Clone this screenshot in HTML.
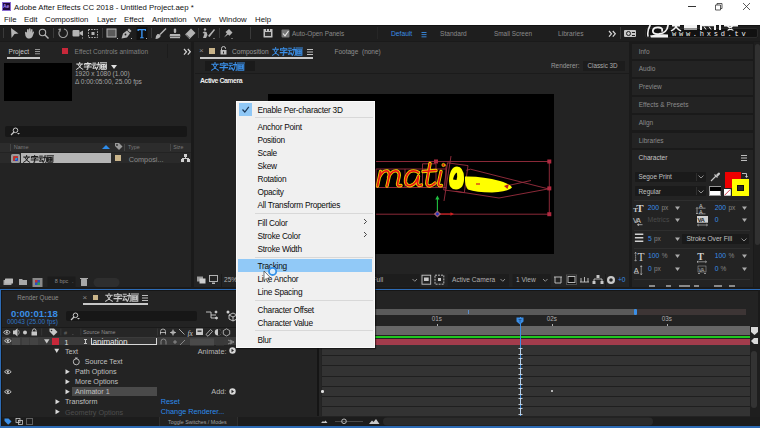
<!DOCTYPE html>
<html><head><meta charset="utf-8">
<style>
*{margin:0;padding:0;box-sizing:border-box}
html,body{width:760px;height:428px;overflow:hidden;background:#1a1a1a;font-family:"Liberation Sans",sans-serif;}
.a{position:absolute}
.t{position:absolute;white-space:nowrap;line-height:1;font-size:8px}
.g{color:#a9a9a9}
.dg{color:#6a6a6a}
.bl{color:#2d8ceb}
.w{color:#e0e0e0}
.panel{position:absolute;background:#232323}
</style></head><body>
<svg width="0" height="0" style="position:absolute"><defs>
<symbol id="wz" viewBox="0 0 34 9">
<g fill="none" stroke="currentColor" stroke-width="1.05" stroke-linecap="square">
<path d="M4 0.6V1.6M0.8 2.3H7.2M2.2 2.8Q3.5 6.5 7.3 8.3M5.8 2.8Q4.5 6.5 0.7 8.3"/>
<path d="M12.8 0.4V1.3M9.3 3.3V1.7H16.3V3.3M10.6 3.2H14.8L12.8 4.6M12.8 4.6V8.2L11.8 8.2M9 5.6H16.6"/>
<path d="M18.3 1.3H21.2M17.8 3.3H21.7M19.6 3.6L18.2 7.2L21.6 6.5M20.8 5.5L21.8 7.5M22.6 2.6H25.9V7.6Q25.9 8.4 24.9 8.3M24.3 0.6Q24.3 6 22.3 8.4"/>
<path d="M26.3 0.9H33.4M27 2.4V8.2H32.8V2.4M28.2 2.8H31.6V6.8H28.2ZM28.2 4.8H31.6M29.9 2.8V6.8"/>
</g></symbol></defs></svg>
<!-- title bar -->
<div class="a" style="left:0;top:0;width:760px;height:25px;background:#fff"></div>
<div class="a" style="left:2px;top:2px;width:9px;height:9px;background:#1f0a3a;border:1px solid #8a6ad0"></div>
<div class="t" style="left:3px;top:4px;font-size:5px;color:#a98bff;font-weight:bold">Ae</div>
<div class="t" style="left:14px;top:3.5px;font-size:7.8px;color:#111">Adobe After Effects CC 2018 - Untitled Project.aep *</div>
<div class="t" style="left:4px;top:16px;font-size:7.8px;color:#111">File</div>
<div class="t" style="left:24px;top:16px;font-size:7.8px;color:#111">Edit</div>
<div class="t" style="left:45px;top:16px;font-size:7.8px;color:#111">Composition</div>
<div class="t" style="left:97px;top:16px;font-size:7.8px;color:#111">Layer</div>
<div class="t" style="left:124px;top:16px;font-size:7.8px;color:#111">Effect</div>
<div class="t" style="left:152px;top:16px;font-size:7.8px;color:#111">Animation</div>
<div class="t" style="left:194px;top:16px;font-size:7.8px;color:#111">View</div>
<div class="t" style="left:219px;top:16px;font-size:7.8px;color:#111">Window</div>
<div class="t" style="left:255px;top:16px;font-size:7.8px;color:#111">Help</div>
<!-- window controls -->
<div class="a" style="left:688px;top:6px;width:8px;height:0.8px;background:#333"></div>
<svg class="a" style="left:714px;top:2px" width="9" height="9"><path d="M1.5 3H6.5V8H1.5Z M3 3V1.5H8V6.5H6.5" fill="none" stroke="#333" stroke-width="0.8"/></svg>
<svg class="a" style="left:742px;top:2px" width="9" height="9"><path d="M1 1L8 8M8 1L1 8" fill="none" stroke="#333" stroke-width="0.8"/></svg>

<!-- toolbar -->
<div class="a" style="left:0;top:25px;width:760px;height:16px;background:#1e1e1e"></div>
<div class="a" style="left:0;top:25px;width:760px;height:1.3px;background:#121212"></div>
<div class="a" style="left:376.5px;top:27px;width:1px;height:12px;background:#262626"></div>


<svg class="a" style="left:0;top:25px" width="760" height="16" viewBox="0 25 760 16">
<g fill="#b4b4b4" stroke="none">
<!-- separators -->
<rect x="3" y="28" width="1" height="10" fill="#3a3a3a"/>
<rect x="53" y="28" width="1" height="10" fill="#3a3a3a"/>
<rect x="102" y="28" width="1" height="10" fill="#3a3a3a"/>
<rect x="151" y="28" width="1" height="10" fill="#3a3a3a"/>
<rect x="198" y="28" width="1" height="10" fill="#3a3a3a"/>
<rect x="219" y="28" width="1" height="10" fill="#3a3a3a"/>
<rect x="250" y="27" width="1" height="12" fill="#3a3a3a"/>
<!-- arrow -->
<path d="M11 28 L18.5 33.5 L14.5 34 L11.5 38 Z"/>
<!-- hand -->
<path d="M25 33 Q25 31 26.5 32 L27 33 L27 29.5 Q28 28.5 28.7 29.5 L28.8 32 L29 28.7 Q30 28 30.6 28.8 L30.7 32 L31.2 29.3 Q32 28.6 32.5 29.5 L32.5 33 L33.2 31.5 Q34.2 31.2 34 32.5 L32.5 36.5 Q31.5 38.5 29.5 38.5 L28 38.5 Q26.5 38 25.5 36 Z"/>
<!-- magnifier -->
<circle cx="42.5" cy="32.5" r="3.2" fill="none" stroke="#b4b4b4" stroke-width="1.1"/>
<path d="M44.8 34.8 L48.5 38.5" stroke="#b4b4b4" stroke-width="1.4"/>
<!-- rotate -->
<path d="M59.5 31 A4.3 4.3 0 1 0 64 29" fill="none" stroke="#9a9a9a" stroke-width="1.1"/>
<path d="M58 29 L61 28.5 L60.5 32 Z" fill="#9a9a9a"/>
<!-- camera -->
<rect x="72.5" y="30" width="7" height="6.5" rx="1"/>
<path d="M79.5 32.5 L83 30.5 L83 36 L79.5 34 Z"/>
<rect x="82" y="37.5" width="1" height="1"/>
<!-- pan behind -->
<g fill="none" stroke="#b4b4b4" stroke-width="1" stroke-dasharray="1.5 1.2">
<rect x="88.5" y="29.5" width="9" height="8"/>
</g>
<rect x="91.5" y="32" width="3" height="3"/>
<!-- rectangle -->
<rect x="107" y="29" width="9" height="8" fill="#5a5a5a" stroke="#b4b4b4" stroke-width="1"/>
<rect x="117" y="38" width="1" height="1"/>
<!-- pen -->
<path d="M121.5 38.5 L123 33.5 L127 30.5 L130 33.5 L127 37.5 Z"/><path d="M127.5 30 L129 28.5 L131.5 31 L130 32.5 Z"/><circle cx="125.5" cy="34.5" r="0.9" fill="#1e1e1e"/>
<rect x="131" y="38" width="1" height="1"/>
<!-- Type tool -->
<rect x="136.5" y="27" width="11" height="13" fill="#101010"/>
<path d="M137.5 29 L146 29 L146 31 L145 31 L144.8 30.2 L142.6 30.2 L142.6 37.3 L143.8 37.6 L143.8 38.3 L140 38.3 L140 37.6 L141.2 37.3 L141.2 30.2 L139 30.2 L138.8 31 L137.5 31 Z" fill="#3b93f0"/>
<rect x="146" y="38" width="1" height="1"/>
<!-- brush -->
<path d="M165.5 28 L166.5 29 L160.5 35 L159.5 34 Z"/><path d="M155.5 39 Q155.5 35.5 157.5 34 Q159 33.5 160.5 35 Q161 37 159 38 Q157.5 39 155.5 39 Z"/>
<!-- stamp -->
<rect x="173.8" y="28.5" width="2.4" height="4.5" rx="1.2"/>
<path d="M170 34 L180 34 L180.5 36.5 L169.5 36.5 Z"/>
<rect x="170" y="37" width="10" height="1.2"/>
<!-- eraser -->
<path d="M185 34.5 L191 28.5 L195.5 33 L189.5 39 Z"/>
<path d="M186 34.5 L189.5 38" stroke="#1e1e1e" stroke-width="0.8"/>
<!-- roto brush -->
<circle cx="205" cy="29.5" r="1.2"/><path d="M203 38 L204.5 33.5 L202.5 33 L204 31.5 L206.5 32 L207.5 35 L206 38 Z"/>
<path d="M208 36 L214 29 L215 30 L209.5 37 Z"/>
<rect x="213.5" y="38" width="1" height="1"/>
<!-- puppet pin -->
<path d="M224 37.5 L227 33.5 L225.5 32 L229 29 L232.5 32.5 L229.5 35.8 L228 34.5 Z"/>
<rect x="231.5" y="38" width="1" height="1"/>
<!-- auto open icon -->
<rect x="263.5" y="29" width="9" height="8.5" rx="0.5" fill="#c0c0c0"/>
<rect x="265" y="32" width="6" height="4" fill="#333"/>
<rect x="266" y="29" width="1" height="2" fill="#333"/>
<rect x="269" y="29" width="1" height="2" fill="#333"/>
<!-- checkbox -->
<rect x="281.5" y="29.5" width="8" height="8" fill="#777" rx="1"/>
<path d="M283 33.5 L285 35.8 L288.5 31" fill="none" stroke="#eaeaea" stroke-width="1.1"/>
</g>
</svg>
<div class="t" style="left:292px;top:31px;font-size:6.4px;color:#8a8a8a">Auto-Open Panels</div>

<div class="t bl" style="left:391px;top:31px;font-size:6.7px;color:#3a8ee6">Default</div>
<svg class="a" style="left:420.5px;top:31.5px" width="7" height="6"><g fill="#3a8ee6"><rect x="0.5" y="0" width="5" height="0.9"/><rect x="0.5" y="2.2" width="5" height="0.9"/><rect x="0.5" y="4.4" width="5" height="0.9"/></g></svg>
<div class="t" style="left:440px;top:31px;font-size:6.6px;color:#8a8a8a">Standard</div>
<div class="t" style="left:494px;top:31px;font-size:6.4px;color:#8a8a8a">Small Screen</div>
<div class="t" style="left:558px;top:31px;font-size:6.65px;color:#8a8a8a">Libraries</div>
<svg class="a" style="left:607.5px;top:30px" width="9" height="8"><path d="M1 1L3.5 3.8L1 6.6M4.8 1L7.3 3.8L4.8 6.6" fill="none" stroke="#d8d8d8" stroke-width="1.2"/></svg>
<div class="a" style="left:620px;top:27px;width:1px;height:12px;background:#3a3a3a"></div>
<div class="a" style="left:624px;top:30px;width:12px;height:7px;background:#c8c8c8;border-radius:1px"></div>
<div class="a" style="left:625.5px;top:31px;width:5px;height:5px;border:1.2px solid #222;border-radius:50%"></div><div class="a" style="left:631.5px;top:32px;width:3px;height:1px;background:#222"></div><div class="a" style="left:631.5px;top:34.5px;width:3px;height:1px;background:#222"></div>
<div class="a" style="left:645px;top:28px;width:113px;height:10px;background:#111;border:1px solid #2a2a2a;border-radius:2px"></div>

<svg class="a" style="left:640px;top:25px" width="120" height="15" viewBox="640 25 120 15">
<g fill="none" stroke="#f2f2f2" stroke-linecap="round">
<path d="M650 25.5Q647 31 648 36" stroke-width="1.6"/>
<path d="M668 25.5Q667 33 659 34Q652 34.5 653 30Q654 27 659 27.5Q663 28 662 31" stroke-width="1.8"/>
</g>
<path d="M650 35.5Q660 33.5 668 34.5L668 37.5L651 37.5Z" fill="#f2f2f2"/>
<g fill="#f4f4f4">
<path d="M672 25h8v1.5h-8zM675 25h2v2q2 2 4.5 3.5l-1 1q-3-1.5-4.5-3.5q-1.5 2-4.5 3.5l-1-1q2.5-1.5 4.5-3.5z"/>
<rect x="684" y="25" width="13" height="3.5"/><rect x="684" y="28.8" width="13" height="1.2" fill="#9a9a9a"/>
<path d="M700 25h2v5h-2zM714 25h2v5h-2zM702 25h12v1.3h-12z"/><path d="M704 26.5l2 3M709 26.5l2 3" stroke="#f4f4f4" stroke-width="1"/>
<path d="M719 25h2v5h-2zM724 25h14v1.5h-14zM727 26.5l5 4h2l-5-4zM733 26.5l-4 4h-2l4-4z"/>
</g>
<text x="672" y="36.3" font-family="Liberation Mono" font-size="7" fill="#f0f0f0" letter-spacing="2.75">www.hxsd.tv</text>
</svg>
<!-- panels -->
<div class="panel" style="left:0;top:42px;width:191px;height:245px"></div>
<div class="panel" style="left:194px;top:42px;width:435px;height:245px"></div>
<div class="panel" style="left:631px;top:42px;width:129px;height:245px"></div>


<!-- PROJECT PANEL -->
<div class="t" style="left:8.5px;top:48.6px;font-size:6.6px;color:#c8c8c8">Project</div>
<svg class="a" style="left:35px;top:49px" width="7" height="7"><g fill="#b0b0b0"><rect x="0" y="0" width="5" height="0.8"/><rect x="0" y="2.2" width="5" height="0.8"/><rect x="0" y="4.4" width="5" height="0.8"/></g></svg>
<div class="a" style="left:7px;top:57px;width:33px;height:1.5px;background:#c8c8c8"></div>
<div class="a" style="left:62px;top:48px;width:6px;height:6px;background:#c7283a"></div>
<div class="t" style="left:74.5px;top:48.6px;font-size:6.6px;color:#808080">Effect Controls animation</div>
<div class="a" style="left:167px;top:44px;width:1px;height:14px;background:#1c1c1c"></div>
<svg class="a" style="left:182.5px;top:47.5px" width="9" height="8"><path d="M1 1L3.5 3.8L1 6.6M4.8 1L7.3 3.8L4.8 6.6" fill="none" stroke="#d8d8d8" stroke-width="1.2"/></svg>
<div class="a" style="left:4px;top:63px;width:68px;height:38px;background:#000"></div>
<svg class="a" style="left:75.8px;top:61.5px;color:#e6e6e6" width="31.5" height="8" viewBox="0 0 34 9" preserveAspectRatio="none"><use href="#wz"/></svg>
<svg class="a" style="left:110.5px;top:64.5px" width="6" height="5"><path d="M0 0h6l-3 4z" fill="#e0e0e0"/></svg>
<div class="t" style="left:75px;top:71px;font-size:6.5px;color:#a6a6a6">1920 x 1080 (1.00)</div>
<div class="t" style="left:75px;top:79px;font-size:6.5px;color:#a6a6a6">&#x394; 0:00:05:00, 25.00 fps</div>
<div class="a" style="left:5px;top:126px;width:182px;height:11px;background:#171717;border-radius:2px"></div>
<svg class="a" style="left:9px;top:127px" width="12" height="9"><circle cx="6.5" cy="3.3" r="2.3" fill="none" stroke="#c8c8c8" stroke-width="1"/><path d="M5 5L2 8" stroke="#c8c8c8" stroke-width="1.2"/><path d="M8 6h3l-1.5 1.5z" fill="#c8c8c8"/></svg>
<div class="a" style="left:0;top:142.5px;width:191px;height:9.5px;background:#2c2c2c"></div>
<div class="a" style="left:10px;top:144px;width:1px;height:7px;background:#444"></div>
<div class="t" style="left:13.8px;top:144.8px;font-size:5.5px;color:#7a7a7a">Name</div>
<svg class="a" style="left:102px;top:145px" width="8" height="5"><path d="M0 4L4 0L8 4z" fill="#2d8ceb"/></svg>
<svg class="a" style="left:114px;top:142px" width="9" height="9"><path d="M1 1h4l3.5 3.5-3.5 3.5-4-4z" fill="#9a9a9a"/><circle cx="3" cy="3" r="0.9" fill="#2c2c2c"/></svg>
<div class="a" style="left:124px;top:144px;width:1px;height:7px;background:#444"></div>
<div class="t" style="left:128px;top:144.8px;font-size:5.4px;color:#7a7a7a">Type</div>
<div class="a" style="left:170px;top:144px;width:1px;height:7px;background:#444"></div>
<div class="t" style="left:173.2px;top:144.8px;font-size:5.2px;color:#7a7a7a">Size</div>
<div class="a" style="left:0;top:153px;width:191px;height:10px;background:#2a2a2a"></div>
<div class="a" style="left:10.5px;top:154px;width:9px;height:8.5px;background:#9a9a9a;border-radius:1.5px"></div>
<div class="a" style="left:12.5px;top:155.5px;width:5px;height:5px;background:#2f9ec0;border-radius:1px;box-shadow:inset 2px 2px 0 #c0342c,inset -1px -1px 0 #3040c0"></div>
<div class="a" style="left:21px;top:153px;width:90px;height:10px;background:#b5b5b5"></div>
<svg class="a" style="left:23px;top:154.5px;color:#111" width="31" height="8" viewBox="0 0 34 9" preserveAspectRatio="none"><use href="#wz"/></svg>
<div class="a" style="left:115px;top:154.5px;width:6px;height:6px;background:#c9b48a"></div>
<div class="t" style="left:128.7px;top:156px;font-size:7.3px;color:#8a8a8a">Composi...</div>
<svg class="a" style="left:181px;top:154px" width="9" height="9"><g fill="#d0d0d0"><rect x="3" y="0" width="3" height="3"/><rect x="0" y="5" width="3" height="3"/><rect x="6" y="5" width="3" height="3"/><rect x="4" y="3" width="1" height="1"/><rect x="1" y="4" width="7" height="1"/></g></svg>
<!-- project bottom bar -->
<div class="a" style="left:0;top:274px;width:191px;height:13px;background:#232323"></div>
<svg class="a" style="left:0;top:275.5px" width="191" height="13"><g fill="#a8a8a8">
<rect x="3.5" y="4" width="8" height="5" rx="0.5"/><rect x="5" y="2.5" width="8" height="5" rx="0.5" fill="#bbb"/>
<path d="M19 3h3l1 1h4v5h-8z"/>
<rect x="32.5" y="2" width="10" height="9" fill="#8a8a8a"/><rect x="35" y="4" width="5" height="5" fill="#2d4ec0"/><rect x="35" y="4" width="2.5" height="2.5" fill="#c03030"/><rect x="37.5" y="6.5" width="2.5" height="2.5" fill="#30a040"/>
<rect x="81" y="3" width="6" height="7" rx="0.5"/><rect x="80" y="2" width="8" height="1"/>
</g>
<rect x="47.5" y="0.5" width="28" height="11" fill="#1c1c1c"/>
<rect x="93.5" y="2" width="26" height="9" rx="4.5" fill="#2e2e2e"/>
</svg>
<div class="t" style="left:54.8px;top:279px;font-size:5.5px;color:#8a8a8a">8 bpc</div>
<div class="t" style="left:72px;top:279px;font-size:5.5px;color:#8a8a8a">.</div>


<!-- COMP PANEL -->
<div class="t" style="left:199px;top:47px;font-size:8px;color:#8a8a8a">&#xD7;</div>
<div class="a" style="left:209px;top:48px;width:6px;height:6px;background:#c9b48a"></div>
<svg class="a" style="left:220px;top:46px" width="7" height="9"><path d="M1.5 4V2.5A2 2 0 0 1 5.5 2.5V3" fill="none" stroke="#c0c0c0" stroke-width="1"/><rect x="0.5" y="4" width="6" height="4.5" fill="#c0c0c0"/><rect x="3" y="5.5" width="1" height="2" fill="#232323"/></svg>
<div class="t" style="left:232px;top:48.6px;font-size:6.6px;color:#9a9a9a">Composition</div>
<svg class="a" style="left:271.5px;top:47px;color:#3a8ee6" width="31" height="9" viewBox="0 0 34 9" preserveAspectRatio="none"><use href="#wz"/></svg>
<svg class="a" style="left:307px;top:48.5px" width="7" height="7"><g fill="#bdbdbd"><rect x="0" y="0" width="6" height="1"/><rect x="0" y="2.5" width="6" height="1"/><rect x="0" y="5" width="6" height="1"/></g></svg>
<div class="a" style="left:200px;top:57px;width:113px;height:1.5px;background:#c8c8c8"></div>
<div class="t" style="left:334.5px;top:48.6px;font-size:6.5px;color:#8e8e8e">Footage&nbsp;&nbsp;(none)</div>

<div class="a" style="left:205px;top:61px;width:50px;height:10px;background:#1a1a1a"></div>
<svg class="a" style="left:211px;top:62px;color:#3a8ee6" width="34" height="9"><use href="#wz"/></svg>
<div class="t" style="left:551px;top:63.2px;font-size:6.4px;color:#9a9a9a">Renderer:</div>
<div class="a" style="left:583px;top:61px;width:42px;height:10px;background:#1c1c1c"></div>
<div class="t" style="left:587.5px;top:63.2px;font-size:6.3px;color:#acacac">Classic 3D</div>
<div class="a" style="left:195px;top:73px;width:434px;height:1px;background:#1b1b1b"></div>
<div class="t" style="left:200px;top:78px;font-size:6.9px;color:#ececec;font-weight:bold;letter-spacing:-0.45px">Active Camera</div>
<div class="a" style="left:268px;top:94px;width:285.5px;height:160px;background:#000"></div>




<!-- TIMELINE -->
<div class="a" style="left:0;top:288.7px;width:760px;height:139.3px;background:#2d6bb5"></div>
<div class="a" style="left:1.3px;top:289.8px;width:758.7px;height:136px;background:#161616"></div>
<div class="a" style="left:2.4px;top:290.8px;width:757.6px;height:134.4px;background:#232323"></div>
<div class="a" style="left:758px;top:289.7px;width:2px;height:136px;background:#1a1a1a"></div>
<div class="t" style="left:17.2px;top:294.5px;font-size:6.3px;color:#8c8c8c">Render Queue</div>
<div class="t" style="left:82.5px;top:293.5px;font-size:8px;color:#8a8a8a">&#xD7;</div>
<div class="a" style="left:92.7px;top:294.5px;width:5.5px;height:5.5px;background:#c9b48a"></div>
<svg class="a" style="left:105px;top:293px;color:#c8c8c8" width="34" height="9"><use href="#wz"/></svg>
<svg class="a" style="left:142px;top:294.5px" width="7" height="7"><g fill="#bdbdbd"><rect x="0" y="0" width="6" height="1"/><rect x="0" y="2.5" width="6" height="1"/><rect x="0" y="5" width="6" height="1"/></g></svg>
<div class="a" style="left:83px;top:303px;width:64.7px;height:1.5px;background:#c8c8c8"></div>
<div class="t" style="left:11px;top:308.5px;font-size:9.6px;color:#3a8ee6;font-weight:bold">0:00:01:18</div>
<div class="t" style="left:6.9px;top:318.5px;font-size:6.5px;color:#2f74c4">00043 (25.00 fps)</div>
<div class="a" style="left:66px;top:310.9px;width:131.4px;height:10px;background:#171717;border-radius:2px"></div>
<svg class="a" style="left:69px;top:311.5px" width="12" height="9"><circle cx="6.5" cy="3.3" r="2.3" fill="none" stroke="#c8c8c8" stroke-width="1"/><path d="M5 5L2 8" stroke="#c8c8c8" stroke-width="1.2"/><path d="M8 6h3l-1.5 1.5z" fill="#c8c8c8"/></svg>
<svg class="a" style="left:205px;top:309px" width="36" height="14"><g fill="none" stroke="#d0d0d0" stroke-width="0.9"><path d="M1 3h5M6 3v6h5M6 6h5"/><circle cx="11" cy="3" r="1" fill="#d0d0d0"/><circle cx="11.5" cy="9" r="1" fill="#d0d0d0"/><path d="M24 6l4-2 4 2v4l-4 2-4-2zM24 6l4 2 4-2M28 8v4"/></g><circle cx="23" cy="3" r="1.5" fill="#d0d0d0"/></svg>
<div class="a" style="left:1.5px;top:327.5px;width:315.5px;height:9.8px;background:#262626"></div>
<div class="a" style="left:1.5px;top:326.8px;width:316px;height:0.8px;background:#1a1a1a"></div>
<svg class="a" style="left:0;top:327px" width="240" height="11" viewBox="0 327 240 11"><g fill="#c8c8c8">
<path d="M3.5 332.3Q6.8 328.3 10.2 332.3Q6.8 336.3 3.5 332.3Z" fill="none" stroke="#c8c8c8" stroke-width="0.9"/><circle cx="6.8" cy="332.3" r="1.1"/>
<path d="M13 330.5h2l2.5-2.2v8.2l-2.5-2.2h-2z"/><path d="M18.5 330Q20 332.3 18.5 334.6" fill="none" stroke="#c8c8c8" stroke-width="0.7"/>
<circle cx="25" cy="332.5" r="2"/>
<rect x="31.5" y="331.5" width="5.5" height="4"/><path d="M32.5 331.5v-1.3a1.8 1.8 0 0 1 3.5 0v1.3" fill="none" stroke="#c8c8c8" stroke-width="0.9"/>
<rect x="41.3" y="328.5" width="0.8" height="7" fill="#3a3a3a"/>
<path d="M49.5 328.5h4.5l3.5 3.5-3.8 3.8-4.2-4.2z"/><circle cx="51.5" cy="330.5" r="0.8" fill="#262626"/>
<rect x="60.5" y="328.5" width="0.8" height="7" fill="#3a3a3a"/>
<text x="64" y="335" font-size="5.5" font-family="Liberation Sans" fill="#6a6a6a">#</text>
<rect x="72.5" y="334" width="0.8" height="0.8" fill="#6a6a6a"/>
<rect x="80.5" y="328.5" width="0.8" height="7" fill="#3a3a3a"/>
<rect x="157" y="328.5" width="0.8" height="7" fill="#3a3a3a"/>
</g>
<g fill="#c8c8c8" stroke="#c8c8c8" stroke-width="0.8">
<path d="M160.5 334.5v-3a2.5 2.5 0 0 1 5 0v3M160 332.5h6" fill="none"/>
<path d="M170 332.5h6M173 329.5v6" fill="none"/><circle cx="173" cy="332.5" r="1.5" fill="none"/>
<path d="M179 329l5.5 5.5" fill="none"/>
</g>
<text x="187.5" y="335.5" font-size="7.5" font-family="Liberation Serif" font-style="italic" fill="#c8c8c8">fx</text>
<g fill="#c8c8c8"><rect x="196" y="328.5" width="7" height="6.5" rx="0.5"/><rect x="197.5" y="330.5" width="4" height="1.3" fill="#262626"/>
<path d="M206 334.5l4.5-5 2 1.8-4.5 5z" fill="none" stroke="#c8c8c8" stroke-width="0.8"/>
<circle cx="218" cy="332.3" r="3.2"/><path d="M218 329.1a3.2 3.2 0 0 1 0 6.4z" fill="#262626"/>
<path d="M226.5 328.8l3.2 1.8v3.6l-3.2 1.8-3.2-1.8v-3.6z" fill="none" stroke="#c8c8c8" stroke-width="0.8"/></g>
</svg>
<div class="t" style="left:83px;top:329.8px;font-size:5.3px;color:#8e8e8e">Source Name</div>
<div class="a" style="left:1.5px;top:337.3px;width:316px;height:7.8px;background:#3b3b3b"></div>
<div class="a" style="left:11.8px;top:337.8px;width:8.7px;height:7px;background:#4a4a4a"></div>
<div class="a" style="left:21.6px;top:337.8px;width:7.6px;height:7px;background:#434343"></div>
<div class="a" style="left:30.3px;top:337.8px;width:7.6px;height:7px;background:#434343"></div>
<div class="a" style="left:52px;top:337.8px;width:7.2px;height:7px;background:#c7283a"></div>
<div class="a" style="left:91px;top:337.8px;width:65.8px;height:7px;border:0.8px solid #d8d8d8;border-top:none;background:#333"></div>
<div class="t" style="left:92.5px;top:337.6px;font-size:8.3px;letter-spacing:-0.1px;color:#e6e6e6">animation</div>
<div class="t" style="left:64.5px;top:338.5px;font-size:7px;color:#e0e0e0">1</div>
<div class="a" style="left:85px;top:339px;width:1px;height:4.5px;background:#c8c8c8"></div>
<div class="a" style="left:84.2px;top:338.8px;width:2.6px;height:0.7px;background:#c8c8c8"></div>
<div class="a" style="left:84.2px;top:343.4px;width:2.6px;height:0.7px;background:#c8c8c8"></div>
<svg class="a" style="left:44px;top:339px" width="6" height="5"><path d="M0 0.3h5.5L2.75 4.5z" fill="#c8c8c8"/></svg>
<svg class="a" style="left:4px;top:338px" width="8" height="6"><path d="M0.5 2.8Q3.8 -1 7.2 2.8Q3.8 6.6 0.5 2.8Z" fill="none" stroke="#d0d0d0" stroke-width="0.9"/><circle cx="3.8" cy="2.8" r="1.1" fill="#d0d0d0"/></svg>
<svg class="a" style="left:159px;top:337.5px" width="80" height="8"><g fill="#a8a8a8" stroke="#a8a8a8" stroke-width="0.7"><path d="M2 6.5v-3a2.5 2.5 0 0 1 5 0v3" fill="none"/><path d="M14 4h4M16 2v4" fill="none"/><path d="M21 7l5-5" fill="none"/></g><rect x="31" y="0.5" width="24" height="7" fill="#4a4a4a"/><rect x="57" y="0.5" width="8" height="7" fill="#3a3a3a"/><path d="M69 2l4 2-4 2M71 2l4 2-4 2" fill="none" stroke="#a8a8a8" stroke-width="0.7"/></svg>
<div class="a" style="left:72.4px;top:386.5px;width:84.8px;height:9.3px;background:#4a4a4a"></div>
<svg class="a" style="left:54.2px;top:348.2px" width="6" height="6"><path d="M0.3 0.8H5.2L2.75 5Z" fill="#d8d8d8"/></svg>
<div class="t" style="left:64.9px;top:348.0px;font-size:7.2px;color:#c0c0c0">Text</div>
<div class="t" style="left:84.7px;top:358.3px;font-size:7.2px;color:#c0c0c0">Source Text</div>
<svg class="a" style="left:64.6px;top:368.5px" width="6" height="6"><path d="M0.5 0.3L4.8 2.75L0.5 5.2Z" fill="#d8d8d8"/></svg>
<div class="t" style="left:75px;top:368.3px;font-size:7.2px;color:#c0c0c0">Path Options</div>
<svg class="a" style="left:64.6px;top:378.5px" width="6" height="6"><path d="M0.5 0.3L4.8 2.75L0.5 5.2Z" fill="#d8d8d8"/></svg>
<div class="t" style="left:75px;top:378.3px;font-size:7.2px;color:#c0c0c0">More Options</div>
<svg class="a" style="left:64.6px;top:388.5px" width="6" height="6"><path d="M0.5 0.3L4.8 2.75L0.5 5.2Z" fill="#d8d8d8"/></svg>
<div class="t" style="left:75px;top:388.3px;font-size:7.2px;color:#c0c0c0">Animator 1</div>
<svg class="a" style="left:54.7px;top:398.5px" width="6" height="6"><path d="M0.5 0.3L4.8 2.75L0.5 5.2Z" fill="#d8d8d8"/></svg>
<div class="t" style="left:64.9px;top:398.3px;font-size:7.2px;color:#c0c0c0">Transform</div>
<svg class="a" style="left:54.7px;top:408.9px" width="6" height="6"><path d="M0.5 0.3L4.8 2.75L0.5 5.2Z" fill="#d8d8d8"/></svg>
<div class="t" style="left:64.9px;top:408.7px;font-size:7.2px;color:#4e4e4e">Geometry Options</div>
<svg class="a" style="left:72px;top:357px" width="9" height="9"><circle cx="4.3" cy="4.8" r="3" fill="none" stroke="#c8c8c8" stroke-width="0.9"/><path d="M3 1h2.6M4.3 1v1" stroke="#c8c8c8" stroke-width="0.9"/></svg>
<svg class="a" style="left:4px;top:368.8px" width="8" height="6"><path d="M0.5 2.8Q3.8 -1 7.2 2.8Q3.8 6.6 0.5 2.8Z" fill="none" stroke="#d0d0d0" stroke-width="0.9"/><circle cx="3.8" cy="2.8" r="1.1" fill="#d0d0d0"/></svg>
<svg class="a" style="left:4px;top:388.8px" width="8" height="6"><path d="M0.5 2.8Q3.8 -1 7.2 2.8Q3.8 6.6 0.5 2.8Z" fill="none" stroke="#d0d0d0" stroke-width="0.9"/><circle cx="3.8" cy="2.8" r="1.1" fill="#d0d0d0"/></svg>
<div class="t" style="left:197.7px;top:347.5px;font-size:7.3px;color:#b8b8b8">Animate:</div>
<div class="t" style="left:211.3px;top:387.8px;font-size:7.3px;color:#b8b8b8">Add:</div>
<svg class="a" style="left:228.8px;top:347.2px" width="7" height="7"><circle cx="3.5" cy="3.5" r="3.2" fill="#d8d8d8"/><path d="M2.5 1.8L5 3.5L2.5 5.2Z" fill="#232323"/></svg>
<svg class="a" style="left:228.8px;top:387.5px" width="7" height="7"><circle cx="3.5" cy="3.5" r="3.2" fill="#d8d8d8"/><path d="M2.5 1.8L5 3.5L2.5 5.2Z" fill="#232323"/></svg>
<div class="t" style="left:160.7px;top:397.5px;font-size:7.3px;color:#2d8ceb">Reset</div>
<div class="t" style="left:160.7px;top:407.8px;font-size:7.3px;color:#2d8ceb">Change Renderer...</div>
<div class="a" style="left:317px;top:305px;width:2.2px;height:111px;background:#151515"></div><div class="a" style="left:319.2px;top:305px;width:2.3px;height:111px;background:#262626"></div>
<div class="a" style="left:321px;top:308.5px;width:315px;height:6.3px;background:#5a5a5a"></div>
<div class="a" style="left:636px;top:308.5px;width:110.3px;height:6.3px;background:#3d3535"></div>
<div class="a" style="left:633.5px;top:308.5px;width:3.5px;height:6.3px;background:#3a8ee6;border-radius:1px"></div>
<div class="a" style="left:467.5px;top:309.5px;width:1.2px;height:4.3px;background:#5a8ecc"></div>
<div class="a" style="left:321px;top:314.8px;width:429px;height:11.4px;background:#232323"></div>
<div class="t" style="left:431.7px;top:315.5px;font-size:6.3px;color:#b0b0b0">01s</div>
<div class="a" style="left:436.5px;top:323.5px;width:1px;height:2px;background:#b0b0b0"></div>
<div class="t" style="left:546.7px;top:315.5px;font-size:6.3px;color:#b0b0b0">02s</div>
<div class="a" style="left:551.5px;top:323.5px;width:1px;height:2px;background:#b0b0b0"></div>
<div class="t" style="left:661.7px;top:315.5px;font-size:6.3px;color:#b0b0b0">03s</div>
<div class="a" style="left:666.5px;top:323.5px;width:1px;height:2px;background:#b0b0b0"></div>
<div class="a" style="left:321px;top:326.2px;width:429px;height:9px;background:#676767"></div>
<div class="a" style="left:321px;top:335.6px;width:429px;height:2.5px;background:#1fc81f"></div>
<div class="a" style="left:321px;top:338.6px;width:429px;height:6.6px;background:#a33c4c"></div>
<div class="a" style="left:321.5px;top:345.2px;width:428.5px;height:70.5px;background:#333333"></div>
<div class="a" style="left:321.5px;top:355.2px;width:428.5px;height:1px;background:#1f1f1f"></div>
<div class="a" style="left:321.5px;top:365.1px;width:428.5px;height:1px;background:#1f1f1f"></div>
<div class="a" style="left:321.5px;top:375.5px;width:428.5px;height:1px;background:#1f1f1f"></div>
<div class="a" style="left:321.5px;top:385.7px;width:428.5px;height:1px;background:#1f1f1f"></div>
<div class="a" style="left:321.5px;top:396.1px;width:428.5px;height:1px;background:#1f1f1f"></div>
<div class="a" style="left:321.5px;top:406px;width:428.5px;height:1px;background:#1f1f1f"></div>
<div class="a" style="left:750px;top:326px;width:10px;height:91px;background:#1e1e1e"></div>
<svg class="a" style="left:750px;top:326px" width="10" height="22"><path d="M1 1h7v5l-3.5 3-3.5-3z" fill="#d8d8d8"/><path d="M1 15l3-3h4v6h-4z" fill="#d8d8d8"/></svg>
<div class="a" style="left:750.8px;top:351px;width:6.5px;height:56.5px;background:#333;border-radius:3px"></div>
<div class="a" style="left:519.7px;top:317px;width:1px;height:99px;background:#3a8ee6"></div>
<svg class="a" style="left:516.3px;top:317px" width="8" height="8"><path d="M0.5 0.5h7v4l-3.5 3-3.5-3z" fill="#3a8ee6"/><path d="M2.5 2.5h3M4 2.5v3" stroke="#1a3a6a" stroke-width="0.6"/></svg>
<svg class="a" style="left:517.5px;top:347.5px" width="5" height="7"><path d="M0.5 0.5h4M2.5 0.5v6M0.5 6.5h4" stroke="#c8d8e8" stroke-width="0.9" fill="none"/></svg>
<svg class="a" style="left:517.5px;top:357.5px" width="5" height="7"><path d="M0.5 0.5h4M2.5 0.5v6M0.5 6.5h4" stroke="#c8d8e8" stroke-width="0.9" fill="none"/></svg>
<svg class="a" style="left:517.5px;top:367.5px" width="5" height="7"><path d="M0.5 0.5h4M2.5 0.5v6M0.5 6.5h4" stroke="#c8d8e8" stroke-width="0.9" fill="none"/></svg>
<svg class="a" style="left:517.5px;top:378.0px" width="5" height="7"><path d="M0.5 0.5h4M2.5 0.5v6M0.5 6.5h4" stroke="#c8d8e8" stroke-width="0.9" fill="none"/></svg>
<svg class="a" style="left:517.5px;top:388.0px" width="5" height="7"><path d="M0.5 0.5h4M2.5 0.5v6M0.5 6.5h4" stroke="#c8d8e8" stroke-width="0.9" fill="none"/></svg>
<svg class="a" style="left:517.5px;top:398.0px" width="5" height="7"><path d="M0.5 0.5h4M2.5 0.5v6M0.5 6.5h4" stroke="#c8d8e8" stroke-width="0.9" fill="none"/></svg>
<svg class="a" style="left:517.5px;top:408.0px" width="5" height="7"><path d="M0.5 0.5h4M2.5 0.5v6M0.5 6.5h4" stroke="#c8d8e8" stroke-width="0.9" fill="none"/></svg>
<div class="a" style="left:550.7px;top:389.9px;width:2.6px;height:2.6px;background:#e0e0e0;border-radius:50%"></div>
<div class="a" style="left:321.2px;top:390.2px;width:2.6px;height:2.6px;background:#e0e0e0;border-radius:50%"></div>
<div class="a" style="left:1.5px;top:416.6px;width:758.5px;height:9.2px;background:#1c1c1c"></div>
<div class="a" style="left:159px;top:417px;width:79px;height:8.5px;background:#222;border-left:1px solid #2e2e2e;border-right:1px solid #2e2e2e"></div>
<div class="t" style="left:168.1px;top:419.5px;font-size:5.3px;color:#a0a0a0">Toggle Switches / Modes</div>
<svg class="a" style="left:0;top:416px" width="760" height="11" viewBox="0 416 760 11"><g fill="#c8c8c8">
<path d="M4.5 418.5h4l3 3-3.3 3.3-3.7-3.7z" fill="#3a8ee6"/>
<rect x="16" y="418.5" width="4" height="4" fill="none" stroke="#c8c8c8" stroke-width="0.8"/><rect x="18.5" y="420.5" width="4" height="4" fill="none" stroke="#c8c8c8" stroke-width="0.8"/>
<rect x="26.5" y="418.5" width="6" height="6" fill="none" stroke="#c8c8c8" stroke-width="0.8" stroke-dasharray="1 1"/>
<path d="M321 423l2-2 1 1 1.5-1.5 2 2.5z"/>
<rect x="335" y="421" width="28" height="0.8" fill="#555"/>
<circle cx="344" cy="421.3" r="2.3" fill="none" stroke="#c8c8c8" stroke-width="0.9"/>
<path d="M369 424l3-3.5 1.5 1.5 2.5-3 3.5 5z"/>
</g>
<rect x="383" y="417.5" width="270" height="8" rx="4" fill="#2b2b2b"/>
</svg>
<!-- COMP VIEWER GRAPHIC -->
<svg class="a" style="left:268px;top:94px" width="286" height="160" viewBox="268 94 286 160">
<g fill="none" stroke="#9a2e3e" stroke-width="0.9">
<path d="M376 161.5H549.3V214.2H376"/>
<path d="M376 169H446M376 187.5H446"/>
<path d="M376 169V187.5M405 169V187.5M422.5 163.8V187.5M436 163.8V187.5M446 165V189M422.5 163.8H436"/>
<path d="M447.5 162.8L468 165.6L464.3 192.7L443.7 189.9Z"/>
<path d="M451 156L444 201"/>
<path d="M466.3 170.3L470.5 169.2L548.4 188.9L499 198L455.8 191.3"/>
<path d="M482 191.3L531 180.5"/>
</g>
<g fill="#b02a40"><rect x="434" y="159.5" width="4" height="4"/><rect x="547.3" y="159.5" width="4" height="4"/><rect x="547.3" y="186.4" width="4" height="4"/><rect x="547.3" y="212.2" width="4" height="4"/></g>
<g fill="none" stroke-linecap="round" stroke-linejoin="round">
<path d="M377.5 186 L380.5 171.5 M379.5 177 Q383 170 387.5 171 Q390 172.5 389 177 L387 186 M388.5 177 Q392 170 397 171 Q400 172.5 399 177 L397.5 184 Q397.5 186.5 401 185.5 M418.5 172.5 Q414 169.5 409.5 172 Q405 176 405.5 182 Q406.5 186.5 411 185.5 Q416 184 418.5 176 L417.5 183.5 Q418 186.5 421.5 185 M430 163.5 L427 181 Q426 186.5 430 186 Q433 185.5 435 183 M423 171.5 Q429 171 436 170.5 M441 171.5 L438.5 183 Q438 186.5 441.5 185.5 " stroke="#f2d800" stroke-width="3.4"/>
<path d="M377.5 186 L380.5 171.5 M379.5 177 Q383 170 387.5 171 Q390 172.5 389 177 L387 186 M388.5 177 Q392 170 397 171 Q400 172.5 399 177 L397.5 184 Q397.5 186.5 401 185.5 M418.5 172.5 Q414 169.5 409.5 172 Q405 176 405.5 182 Q406.5 186.5 411 185.5 Q416 184 418.5 176 L417.5 183.5 Q418 186.5 421.5 185 M430 163.5 L427 181 Q426 186.5 430 186 Q433 185.5 435 183 M423 171.5 Q429 171 436 170.5 M441 171.5 L438.5 183 Q438 186.5 441.5 185.5 " stroke="#e81515" stroke-width="1.7"/>
<circle cx="443.5" cy="165" r="1.6" fill="#e81515" stroke="#f2d800" stroke-width="0.8"/>
</g>
<path d="M457 166.5Q463.5 167 464 177Q464.5 189 456 189.5Q449 189.5 449 181Q449.5 167 457 166.5Z" fill="#ffff00"/>
<path d="M465 176.5Q482 176 500 181Q511 184.5 512 187.5Q509 191.5 492 192.5Q476 192.5 468 189.5Q464.5 186 465 176.5Z" fill="#ffff00"/>
<path d="M453 179.5Q454 174 457 172.5Q457.5 177 456.5 180Z" fill="#000"/>
<path d="M476 184h4" stroke="#d02020" stroke-width="1.2"/>
<path d="M504 186l5-2-1.5 5z" fill="#c02020"/>
<path d="M437.4 214V198" stroke="#20c040" stroke-width="1.1"/><path d="M435.3 199.5L437.4 195.5L439.5 199.5Z" fill="#20c040"/>
<path d="M437.4 214H452" stroke="#d02020" stroke-width="1.1"/><path d="M450.5 212.2L454 214L450.5 215.8Z" fill="#d02020"/>
<path d="M437.4 210.5L441 214L437.4 217.5L433.8 214Z" fill="#a06070"/><circle cx="437.4" cy="214" r="1.4" fill="#2030c0"/>
</svg>
<!-- COMP BOTTOM TOOLBAR -->
<svg class="a" style="left:194px;top:273px" width="435" height="15" viewBox="194 272 435 15">
<g fill="#b8b8b8">
<rect x="197" y="275.5" width="6" height="5" fill="#9a9a9a"/><rect x="199.5" y="277.5" width="6" height="5" fill="#cfcfcf"/>
<rect x="209.5" y="274.5" width="8" height="6" fill="none" stroke="#c0c0c0" stroke-width="0.9"/><rect x="212" y="281.5" width="3" height="1.5"/>
</g>
<rect x="221" y="273" width="1" height="13" fill="#1a1a1a"/>
<rect x="360" y="273" width="59.6" height="12.5" fill="#1d1d1d"/>
<path d="M412.5 278L414.8 280.3L417 278" fill="none" stroke="#aaa" stroke-width="0.8"/>
<rect x="422" y="274.2" width="8.7" height="9" fill="none" stroke="#c8c8c8" stroke-width="0.9"/><rect x="424" y="276.5" width="4.7" height="3.5" fill="#c8c8c8"/>
<rect x="435" y="274.2" width="8.8" height="9" fill="none" stroke="#c8c8c8" stroke-width="0.9" stroke-dasharray="2 1"/><rect x="438" y="277" width="3" height="3" fill="#c8c8c8"/>
<rect x="447.8" y="273" width="61" height="12.5" fill="#1d1d1d"/>
<path d="M500.5 278L502.8 280.3L505 278" fill="none" stroke="#aaa" stroke-width="0.8"/>
<rect x="512.6" y="273" width="38" height="12.5" fill="#1d1d1d"/>
<path d="M543 278L545.3 280.3L547.5 278" fill="none" stroke="#aaa" stroke-width="0.8"/>
<g fill="none" stroke="#c8c8c8" stroke-width="0.9">
<path d="M554 276h8M555 276v6h6v-6"/>
<rect x="566.5" y="274" width="10" height="9.5" fill="#111" stroke="#555"/><rect x="568" y="275.5" width="7" height="6"/>
<path d="M580 281h9M581 281v-4M588 281v-4M584.5 281v-5"/>
<path d="M598 274.5v2M594 280v-2h8v2"/>
</g>
<g fill="#c8c8c8"><rect x="596.5" y="274" width="3" height="3"/><rect x="592.5" y="280" width="3" height="3"/><rect x="600.5" y="280" width="3" height="3"/>
<circle cx="611" cy="279" r="4"/><circle cx="611" cy="279" r="1.8" fill="#232323"/></g>
<rect x="605" y="273" width="1" height="13" fill="#1a1a1a"/>
</svg>
<div class="t" style="left:224px;top:277px;font-size:6.6px;color:#b0b0b0">25%</div>
<div class="t" style="left:372.5px;top:277px;font-size:6.6px;color:#b0b0b0">Full</div>
<div class="t" style="left:452px;top:277px;font-size:6.6px;color:#b0b0b0">Active Camera</div>
<div class="t" style="left:516px;top:277px;font-size:6.6px;color:#b0b0b0">1 View</div>
<div class="t" style="left:618px;top:277px;font-size:6.6px;color:#3a8ee6">+0</div>

<!-- CONTEXT MENU -->
<div class="a" style="left:236px;top:101px;width:139px;height:247px;background:#f0f0f0;border:1px solid #fafafa;box-shadow:1px 1px 1px rgba(0,0,0,0.5)"></div>
<div class="a" style="left:238px;top:259.2px;width:134px;height:12.4px;background:#91c9f7"></div>
<div class="a" style="left:238.5px;top:103px;width:13px;height:12.7px;background:#90c8f6"></div>
<svg class="a" style="left:241px;top:105px" width="9" height="9"><path d="M1.5 4.5L3.8 7L7.8 1.8" fill="none" stroke="#1b3656" stroke-width="1.2"/></svg>
<div class="a" style="left:255px;top:116.5px;width:118px;height:1px;background:#d8d8d8"></div>
<div class="a" style="left:255px;top:212.5px;width:118px;height:1px;background:#d8d8d8"></div>
<div class="a" style="left:255px;top:257.0px;width:118px;height:1px;background:#d8d8d8"></div>
<div class="a" style="left:255px;top:299.5px;width:118px;height:1px;background:#d8d8d8"></div>
<div class="a" style="left:255px;top:330.2px;width:118px;height:1px;background:#d8d8d8"></div>
<div class="t" style="left:257.5px;top:105.9px;font-size:8.3px;letter-spacing:-0.27px;color:#0c0c0c">Enable Per-character 3D</div>
<div class="t" style="left:257.5px;top:122.9px;font-size:8.3px;letter-spacing:-0.27px;color:#0c0c0c">Anchor Point</div>
<div class="t" style="left:257.5px;top:135.9px;font-size:8.3px;letter-spacing:-0.27px;color:#0c0c0c">Position</div>
<div class="t" style="left:257.5px;top:148.9px;font-size:8.3px;letter-spacing:-0.27px;color:#0c0c0c">Scale</div>
<div class="t" style="left:257.5px;top:161.9px;font-size:8.3px;letter-spacing:-0.27px;color:#0c0c0c">Skew</div>
<div class="t" style="left:257.5px;top:174.9px;font-size:8.3px;letter-spacing:-0.27px;color:#0c0c0c">Rotation</div>
<div class="t" style="left:257.5px;top:187.9px;font-size:8.3px;letter-spacing:-0.27px;color:#0c0c0c">Opacity</div>
<div class="t" style="left:257.5px;top:200.9px;font-size:8.3px;letter-spacing:-0.27px;color:#0c0c0c">All Transform Properties</div>
<div class="t" style="left:257.5px;top:218.9px;font-size:8.3px;letter-spacing:-0.27px;color:#0c0c0c">Fill Color</div>
<div class="t" style="left:257.5px;top:231.9px;font-size:8.3px;letter-spacing:-0.27px;color:#0c0c0c">Stroke Color</div>
<div class="t" style="left:257.5px;top:244.9px;font-size:8.3px;letter-spacing:-0.27px;color:#0c0c0c">Stroke Width</div>
<div class="t" style="left:257.5px;top:262.4px;font-size:8.3px;letter-spacing:-0.27px;color:#0c0c0c">Tracking</div>
<div class="t" style="left:257.5px;top:275.4px;font-size:8.3px;letter-spacing:-0.27px;color:#0c0c0c">Line Anchor</div>
<div class="t" style="left:257.5px;top:288.2px;font-size:8.3px;letter-spacing:-0.27px;color:#0c0c0c">Line Spacing</div>
<div class="t" style="left:257.5px;top:305.9px;font-size:8.3px;letter-spacing:-0.27px;color:#0c0c0c">Character Offset</div>
<div class="t" style="left:257.5px;top:318.9px;font-size:8.3px;letter-spacing:-0.27px;color:#0c0c0c">Character Value</div>
<div class="t" style="left:257.5px;top:335.9px;font-size:8.3px;letter-spacing:-0.27px;color:#0c0c0c">Blur</div>
<svg class="a" style="left:363px;top:218px" width="5" height="8"><path d="M1 1L3.5 3.5L1 6" fill="none" stroke="#333" stroke-width="0.9"/></svg>
<svg class="a" style="left:363px;top:231px" width="5" height="8"><path d="M1 1L3.5 3.5L1 6" fill="none" stroke="#333" stroke-width="0.9"/></svg>
<svg class="a" style="left:260px;top:262px" width="20" height="22" viewBox="260 262 20 22"><path d="M264 271L264 280.5L266.3 278.5L268.2 282.5L269.5 281.8L267.6 278L270.6 277.8Z" fill="#fff" stroke="#222" stroke-width="0.6"/><circle cx="272.6" cy="271.4" r="3.6" fill="#d8ebfb" stroke="#3591e8" stroke-width="1.8"/></svg>

<!-- RIGHT PANELS -->
<div class="a" style="left:629px;top:42px;width:131px;height:245px;background:#1a1a1a"></div>
<div class="a" style="left:754px;top:42px;width:6px;height:245px;background:#1e1e1e"></div>
<div class="a" style="left:754.5px;top:43.6px;width:5px;height:201px;background:#313131;border-radius:2.5px"></div>
<div class="a" style="left:631.5px;top:43.5px;width:121.5px;height:15.8px;background:#232323"></div>
<div class="t" style="left:638.7px;top:48.5px;font-size:6.5px;color:#8c8c8c">Info</div>
<div class="a" style="left:631.5px;top:61.3px;width:121.5px;height:15.8px;background:#232323"></div>
<div class="t" style="left:638.7px;top:66.3px;font-size:6.5px;color:#8c8c8c">Audio</div>
<div class="a" style="left:631.5px;top:79.1px;width:121.5px;height:15.8px;background:#232323"></div>
<div class="t" style="left:638.7px;top:84.1px;font-size:6.5px;color:#8c8c8c">Preview</div>
<div class="a" style="left:631.5px;top:96.9px;width:121.5px;height:15.8px;background:#232323"></div>
<div class="t" style="left:638.7px;top:101.9px;font-size:6.5px;color:#8c8c8c">Effects &amp; Presets</div>
<div class="a" style="left:631.5px;top:114.7px;width:121.5px;height:15.8px;background:#232323"></div>
<div class="t" style="left:638.7px;top:119.7px;font-size:6.5px;color:#8c8c8c">Align</div>
<div class="a" style="left:631.5px;top:132.5px;width:121.5px;height:15.8px;background:#232323"></div>
<div class="t" style="left:638.7px;top:137.5px;font-size:6.5px;color:#8c8c8c">Libraries</div>
<div class="a" style="left:631.5px;top:150.3px;width:121.5px;height:137px;background:#232323"></div>
<div class="t" style="left:638.5px;top:155px;font-size:6.6px;color:#c4c4c4">Character</div>
<svg class="a" style="left:741px;top:154.5px" width="7" height="7"><g fill="#bdbdbd"><rect x="0" y="0" width="6" height="1"/><rect x="0" y="2.5" width="6" height="1"/><rect x="0" y="5" width="6" height="1"/></g></svg>
<div class="a" style="left:634.7px;top:172px;width:71px;height:10px;background:#1a1a1a;border-radius:1px"></div>
<div class="a" style="left:695.5px;top:173px;width:1px;height:8px;background:#2e2e2e"></div>
<div class="t" style="left:638.5px;top:174px;font-size:6.4px;color:#c0c0c0">Segoe Print</div>
<svg class="a" style="left:698px;top:175px" width="6" height="4"><path d="M0.5 0.5L3 3L5.5 0.5" fill="none" stroke="#aaa" stroke-width="0.8"/></svg>
<div class="a" style="left:634.7px;top:186.4px;width:71px;height:10px;background:#1a1a1a;border-radius:1px"></div>
<div class="a" style="left:695.5px;top:187.4px;width:1px;height:8px;background:#2e2e2e"></div>
<div class="t" style="left:638.5px;top:188.5px;font-size:6.4px;color:#c0c0c0">Regular</div>
<svg class="a" style="left:698px;top:189.5px" width="6" height="4"><path d="M0.5 0.5L3 3L5.5 0.5" fill="none" stroke="#aaa" stroke-width="0.8"/></svg>
<svg class="a" style="left:709px;top:171px" width="12" height="12"><path d="M2 10L7 5M5.5 3.5L8.5 6.5" stroke="#c8c8c8" stroke-width="1.1" fill="none"/><path d="M7 4L9 2Q10 1.2 10.8 2Q11.5 3 10.5 3.8L8.5 5.8Z" fill="#c8c8c8"/></svg>
<div class="a" style="left:724.6px;top:171.8px;width:16.7px;height:16px;background:#ee0000"></div>
<svg class="a" style="left:741px;top:171px" width="8" height="8"><path d="M1 2.5H5.5V6" fill="none" stroke="#ccc" stroke-width="0.9"/><path d="M4 5L5.5 7L7 5" fill="#ccc"/></svg>
<div class="a" style="left:731.9px;top:179.3px;width:17.4px;height:16.8px;background:#ffff00"></div>
<div class="a" style="left:737px;top:184.5px;width:7px;height:6.3px;background:#2a2a2a;border:1px solid #111"></div>
<div class="a" style="left:708.7px;top:185.8px;width:12.6px;height:10.2px;background:#fff;border:1px solid #999"></div>
<div class="a" style="left:709.5px;top:186.6px;width:11px;height:4.5px;background:#000"></div>
<svg class="a" style="left:724.4px;top:189px" width="7" height="7"><rect x="0" y="0" width="6.8" height="6.7" fill="#fff"/><path d="M0.5 6.3L6.3 0.5" stroke="#d03040" stroke-width="0.9"/></svg>
<div class="a" style="left:634px;top:200px;width:116px;height:1px;background:#2e2e2e"></div>
<div class="a" style="left:634px;top:230px;width:116px;height:1px;background:#2e2e2e"></div>
<div class="a" style="left:634px;top:248px;width:116px;height:1px;background:#2e2e2e"></div>
<div class="a" style="left:634px;top:279.4px;width:116px;height:1px;background:#2e2e2e"></div>
<div class="t" style="left:647.8px;top:204.6px;font-size:6.8px;color:#3a8ee6">200</div><div class="t" style="left:661.5px;top:204.6px;font-size:6.5px;color:#858585">px</div>
<svg class="a" style="left:674.5px;top:205.5px" width="5" height="5"><path d="M0 0.5H5L2.5 4Z" fill="#aaa"/></svg>
<div class="t" style="left:714.7px;top:204.6px;font-size:6.8px;color:#3a8ee6">200</div><div class="t" style="left:728.4000000000001px;top:204.6px;font-size:6.5px;color:#858585">px</div>
<svg class="a" style="left:741.5px;top:205.5px" width="5" height="5"><path d="M0 0.5H5L2.5 4Z" fill="#aaa"/></svg>
<div class="t" style="left:647.5px;top:216.5px;font-size:6.8px;color:#4a4a4a">Metrics</div>
<svg class="a" style="left:674.5px;top:218px" width="5" height="5"><path d="M0 0.5H5L2.5 4Z" fill="#aaa"/></svg>
<div class="t" style="left:714.7px;top:217.1px;font-size:6.8px;color:#3a8ee6">0</div>
<svg class="a" style="left:741.5px;top:218px" width="5" height="5"><path d="M0 0.5H5L2.5 4Z" fill="#aaa"/></svg>
<div class="t" style="left:648px;top:235.6px;font-size:6.8px;color:#3a8ee6">5</div><div class="t" style="left:653.9px;top:235.6px;font-size:6.5px;color:#858585">px</div>
<svg class="a" style="left:674.5px;top:236.5px" width="5" height="5"><path d="M0 0.5H5L2.5 4Z" fill="#aaa"/></svg>
<div class="a" style="left:682px;top:233.9px;width:67.3px;height:10.5px;background:#1a1a1a;border-radius:1px"></div>
<div class="t" style="left:686.4px;top:235.6px;font-size:6.65px;color:#c0c0c0">Stroke Over Fill</div>
<svg class="a" style="left:741px;top:237.5px" width="6" height="4"><path d="M0.5 0.5L3 3L5.5 0.5" fill="none" stroke="#aaa" stroke-width="0.8"/></svg>
<div class="t" style="left:648px;top:253.1px;font-size:6.8px;color:#3a8ee6">100</div><div class="t" style="left:661.7px;top:253.1px;font-size:6.5px;color:#858585">%</div>
<svg class="a" style="left:674.5px;top:254px" width="5" height="5"><path d="M0 0.5H5L2.5 4Z" fill="#aaa"/></svg>
<div class="t" style="left:714.7px;top:253.1px;font-size:6.8px;color:#3a8ee6">100</div><div class="t" style="left:728.4000000000001px;top:253.1px;font-size:6.5px;color:#858585">%</div>
<svg class="a" style="left:741.5px;top:254px" width="5" height="5"><path d="M0 0.5H5L2.5 4Z" fill="#aaa"/></svg>
<div class="t" style="left:648px;top:266.1px;font-size:6.8px;color:#3a8ee6">0</div><div class="t" style="left:653.9px;top:266.1px;font-size:6.5px;color:#858585">px</div>
<svg class="a" style="left:674.5px;top:267px" width="5" height="5"><path d="M0 0.5H5L2.5 4Z" fill="#aaa"/></svg>
<div class="t" style="left:714.7px;top:266.1px;font-size:6.8px;color:#3a8ee6">0</div><div class="t" style="left:720.6px;top:266.1px;font-size:6.5px;color:#858585">%</div>
<svg class="a" style="left:741.5px;top:267px" width="5" height="5"><path d="M0 0.5H5L2.5 4Z" fill="#aaa"/></svg>
<svg class="a" style="left:625px;top:198px" width="130" height="90" viewBox="625 198 130 90">
<g fill="#d0d0d0">
<text x="633.3" y="211.6" font-family="Liberation Serif" font-weight="bold" font-size="7">T</text>
<text x="636.3" y="211.6" font-family="Liberation Serif" font-weight="bold" font-size="11">T</text>
<text x="633" y="222.8" font-family="Liberation Sans" font-size="7" letter-spacing="-0.8">VA</text>
<path d="M637.5 224.7h5M637.5 224.7l1.5-1M637.5 224.7l1.5 1" stroke="#d0d0d0" stroke-width="0.7" fill="none"/>
<rect x="634.9" y="233.5" width="8.4" height="1.5"/><rect x="634.9" y="237" width="8.4" height="1.5"/><rect x="634.9" y="240.5" width="8.4" height="1.5"/>
<text x="637.6" y="261.2" font-family="Liberation Serif" font-size="11.5">T</text>
<path d="M635.6 252.5v8.5" stroke="#d0d0d0" stroke-width="0.8" stroke-dasharray="1.2 0.8"/>
<path d="M634.6 253.5l1-1.2 1 1.2M634.6 260l1 1.2 1-1.2" stroke="#d0d0d0" stroke-width="0.6" fill="none"/>
<text x="633.8" y="273" font-family="Liberation Sans" font-size="7.5">A</text>
<path d="M634 273.3h5" stroke="#d0d0d0" stroke-width="0.6"/>
<path d="M641.2 265.5v9.5M640.3 267l0.9-1.2 0.9 1.2M640.3 273.5l0.9 1.2 0.9-1.2" stroke="#d0d0d0" stroke-width="0.6" fill="none"/>
<text x="699" y="208" font-family="Liberation Sans" font-size="5.5">A</text>
<text x="699" y="213.8" font-family="Liberation Sans" font-size="5.5">A</text>
<path d="M698.5 208.2h7M698.5 213.9h7" stroke="#d0d0d0" stroke-width="0.6"/>
<path d="M697 207.5v6.5M696.2 208.5l0.8-1 0.8 1M696.2 213l0.8 1 0.8-1" stroke="#d0d0d0" stroke-width="0.6" fill="none"/>
<rect x="697" y="216" width="11" height="6.7"/>
<text x="697.6" y="221.9" font-family="Liberation Sans" font-weight="bold" font-size="6" letter-spacing="-0.6" fill="#232323">VA</text>
<path d="M697.5 225h10M697.5 225l1.2-1M697.5 225l1.2 1M707.5 225l-1.2-1M707.5 225l-1.2 1" stroke="#d0d0d0" stroke-width="0.6" fill="none"/>
<text x="697.2" y="259.8" font-family="Liberation Serif" font-weight="bold" font-size="10">T</text>
<path d="M697 261.8h9.5M697 261.8l1.2-1M697 261.8l1.2 1M706.5 261.8l-1.2-1M706.5 261.8l-1.2 1" stroke="#d0d0d0" stroke-width="0.6" fill="none"/>
<rect x="698" y="266" width="8" height="6" fill="none" stroke="#9a9a9a" stroke-width="0.6"/>
<text x="698.5" y="271.5" font-family="Liberation Sans" font-size="5" fill="#b0b0b0" letter-spacing="-0.5">VA</text>
<path d="M698 273.5h2M704 273.5h2" stroke="#c0c0c0" stroke-width="0.7"/>
</g>
<g fill="#8a8a8a"><rect x="649" y="285" width="6" height="2"/><rect x="666" y="285" width="5" height="2"/><rect x="679" y="285" width="11" height="2"/><rect x="694" y="285" width="5" height="2"/><rect x="714" y="285" width="8" height="2"/><rect x="729" y="285" width="6" height="2"/></g>
</svg>
</body></html>
